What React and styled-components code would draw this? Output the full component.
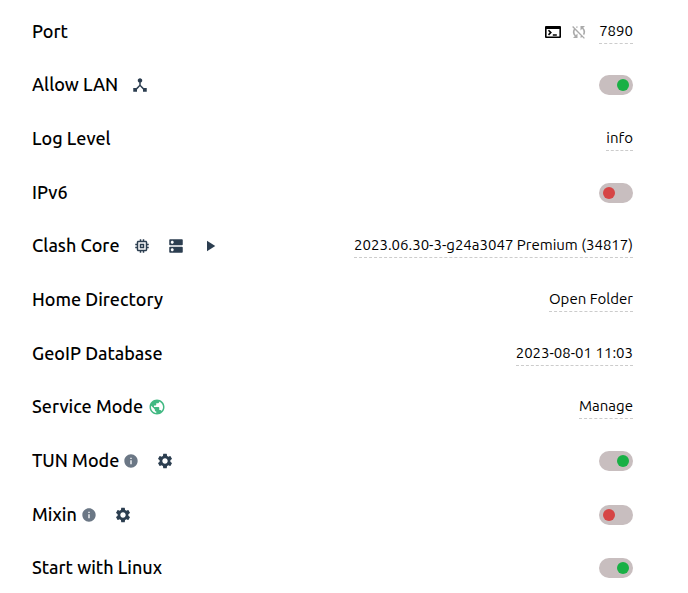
import React from 'react';
import styled, { createGlobalStyle } from 'styled-components';
import { MdSyncDisabled, MdDeviceHub, MdMemory, MdDns, MdPlayArrow, MdPublic, MdInfo, MdSettings } from 'react-icons/md';

const GlobalStyle = createGlobalStyle`
  * { box-sizing: border-box; }
  body {
    margin: 0;
    background: #fff;
    color: #000;
    font-family: Ubuntu, "Noto Sans", sans-serif;
  }
`;

const SettingsList = styled.main`
  display: flex;
  flex-direction: column;
  padding: 5px 55px 0 32px;
`;

const Row = styled.div`
  display: flex;
  align-items: center;
  justify-content: space-between;
  height: 54px;
  &:nth-child(3n + 1) { height: 53px; }
`;

const Heading = styled.div`
  display: flex;
  align-items: center;
`;

const Label = styled.label`
  padding-bottom: 2px;
  font-size: 18px;
  line-height: 24px;
  font-weight: 500;
  white-space: nowrap;
`;

const Actions = styled.div`
  display: flex;
  align-items: center;
`;

const IconButton = styled.button`
  display: flex;
  padding: 0;
  border: 0;
  background: none;
  cursor: pointer;
  color: ${(p) => p.$color || '#2c3e50'};
  font-size: ${(p) => p.$size || 18}px;
  margin-left: ${(p) => p.$gap || 0}px;
`;

const Value = styled.button`
  margin-left: 11px;
  padding: 0 0 1px;
  border: 0;
  border-bottom: 1px dashed #ccc;
  background: none;
  color: #000;
  font-family: inherit;
  font-size: 15px;
  line-height: 22px;
  white-space: nowrap;
  cursor: pointer;
`;

const Switch = styled.input`
  appearance: none;
  display: flex;
  align-items: center;
  width: 34px;
  height: 20px;
  margin: 0;
  padding: 0 4px;
  border-radius: 10px;
  background: #c8bebf;
  cursor: pointer;
  &::before {
    content: "";
    width: 12px;
    height: 12px;
    border-radius: 50%;
    background: #d64545;
  }
  &:checked { justify-content: flex-end; }
  &:checked::before { background: #18b045; }
`;

function TerminalIcon() {
  return (
    <svg width="18" height="18" viewBox="0 0 18 18" fill="none" stroke="currentColor">
      <path d="M2 3h14a1 1 0 0 1 1 1v10a1 1 0 0 1-1 1H2a1 1 0 0 1-1-1V4a1 1 0 0 1 1-1zM2.600 6v7.400h12.800V6z" fill="currentColor" fillRule="evenodd" stroke="none" />
      <path d="M4.500 7.300l2.300 2.300-2.300 2.300M8.800 12h4" strokeWidth="1.600" />
    </svg>
  );
}

const settings = [
  {
    id: 'port', label: 'Port', value: '7890',
    actions: [
      { icon: TerminalIcon, name: 'Open terminal', color: '#000' },
      { icon: MdSyncDisabled, name: 'Random port off', color: '#aaa', gap: 8 },
    ],
  },
  { id: 'lan', label: 'Allow LAN', on: true, icons: [{ icon: MdDeviceHub, name: 'Interfaces', gap: 13 }] },
  { id: 'log', label: 'Log Level', value: 'info' },
  { id: 'ipv6', label: 'IPv6', on: false },
  {
    id: 'core', label: 'Clash Core', value: '2023.06.30-3-g24a3047 Premium (34817)',
    icons: [
      { icon: MdMemory, name: 'Core', gap: 13 },
      { icon: MdDns, name: 'Servers', gap: 16 },
      { icon: MdPlayArrow, name: 'Run', gap: 16 },
    ],
  },
  { id: 'home', label: 'Home Directory', value: 'Open Folder' },
  { id: 'geo', label: 'GeoIP Database', value: '2023-08-01 11:03' },
  { id: 'service', label: 'Service Mode', value: 'Manage', icons: [{ icon: MdPublic, name: 'Service status', color: '#42b983', gap: 5 }] },
  {
    id: 'tun', label: 'TUN Mode', on: true,
    icons: [
      { icon: MdInfo, name: 'About TUN mode', color: '#6b7785', size: 16, gap: 4 },
      { icon: MdSettings, name: 'TUN settings', gap: 17 },
    ],
  },
  {
    id: 'mixin', label: 'Mixin', on: false,
    icons: [
      { icon: MdInfo, name: 'About mixin', color: '#6b7785', size: 16, gap: 4 },
      { icon: MdSettings, name: 'Mixin settings', gap: 17 },
    ],
  },
  { id: 'start', label: 'Start with Linux', on: true },
];

function Icons({ items = [] }) {
  return items.map(({ icon: Icon, name, color, size, gap }) => (
    <IconButton key={name} type="button" aria-label={name} $color={color} $size={size} $gap={gap}>
      <Icon />
    </IconButton>
  ));
}

export default function App() {
  return (
    <>
      <GlobalStyle />
      <SettingsList>
        {settings.map((s) => (
          <Row key={s.id}>
            <Heading>
              <Label htmlFor={s.id}>{s.label}</Label>
              <Icons items={s.icons} />
            </Heading>
            <Actions>
              <Icons items={s.actions} />
              {s.value
                ? <Value id={s.id} type="button">{s.value}</Value>
                : <Switch id={s.id} type="checkbox" role="switch" defaultChecked={s.on} />}
            </Actions>
          </Row>
        ))}
      </SettingsList>
    </>
  );
}
